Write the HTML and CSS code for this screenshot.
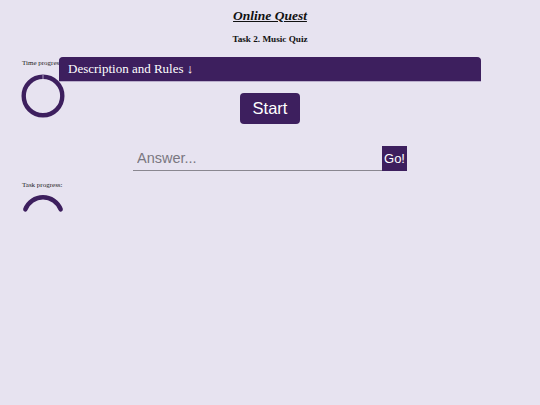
FILE: index.html
```html
<!DOCTYPE html>
<html lang="en">
<head>
<meta charset="utf-8">
<title>Online Quest</title>
<link rel="stylesheet" href="styles.css">
</head>
<body>
<header class="head">
  <h1 class="title">Online Quest</h1>
  <h2 class="subtitle">Task 2. Music Quiz</h2>
</header>
<div class="layout">
  <aside class="side">
    <div class="side-label">Time progress:</div>
    <svg class="ring" width="44" height="44" viewBox="0 0 44 44">
      <circle cx="22" cy="22" r="19.3" fill="none" stroke="#3d1f5e" stroke-width="4.4"/>
      <line x1="22" y1="0.6" x2="22" y2="5" stroke="#cbbfdc" stroke-width="0.8"/>
    </svg>
    <div class="side-label task-label">Task progress:</div>
    <svg class="arc" width="44" height="20" viewBox="0 0 44 20">
      <path d="M4.3 15.4 A19 19 0 0 1 39.7 15.4" fill="none" stroke="#3d1f5e" stroke-width="4.4" stroke-linecap="round"/>
    </svg>
  </aside>
  <main class="main">
    <div class="rules-bar">Description and Rules ↓</div>
    <div class="start-row"><button class="start-btn">Start</button></div>
    <form class="answer-row">
      <input class="answer-input" type="text" placeholder="Answer...">
      <button class="go-btn" type="button">Go!</button>
    </form>
  </main>
  <div class="spacer"></div>
</div>
</body>
</html>
```
FILE: styles.css
```css
html, body {
  margin: 0;
  padding: 0;
  background: #e7e3f0;
}
body {
  font-family: "Liberation Serif", "Times New Roman", serif;
  color: #111;
  width: 540px;
  height: 405px;
  overflow: hidden;
}
.head {
  padding-top: 8px;
  text-align: center;
}
.title {
  margin: 0;
  font-size: 13.5px;
  line-height: 16px;
  font-style: italic;
  font-weight: bold;
  text-decoration: underline;
}
.subtitle {
  margin: 7px 0 0;
  font-size: 9.2px;
  line-height: 16px;
  font-weight: bold;
}
.layout {
  margin-top: 10px;
  display: grid;
  grid-template-columns: 59px 1fr 59px;
}
.side {
  padding-left: 22px;
  padding-top: 2px;
  display: flex;
  flex-direction: column;
  align-items: flex-start;
}
.side-label {
  font-size: 7px;
  line-height: 8px;
  white-space: nowrap;
  color: #222;
}
.ring {
  display: block;
  margin-top: 7px;
  margin-left: -1.5px;
}
.task-label {
  margin-top: 63px;
}
.arc {
  display: block;
  margin-top: 4.5px;
  margin-left: -1.5px;
}
.main {
  position: relative;
  display: flex;
  flex-direction: column;
  align-items: stretch;
}
.rules-bar {
  height: 23.5px;
  background: #3d1f5e;
  border-radius: 4px 4px 0 0;
  color: #fff;
  font-size: 13px;
  line-height: 24px;
  padding-left: 9px;
  box-shadow: 0 0.5px 0 #8e7aa8;
}
.start-row {
  display: flex;
  justify-content: center;
  margin-top: 12.5px;
}
.start-btn {
  width: 60px;
  height: 31px;
  border: none;
  border-radius: 4px;
  background: #3d1f5e;
  color: #fff;
  font-family: "Liberation Sans", Arial, sans-serif;
  font-size: 16.5px;
  padding: 0;
}
.answer-row {
  margin: 22px 0 0;
  display: flex;
  justify-content: center;
}
.answer-input {
  width: 249px;
  height: 25px;
  box-sizing: border-box;
  border: none;
  border-bottom: 1px solid #8a8790;
  background: transparent;
  font-family: "Liberation Sans", Arial, sans-serif;
  font-size: 14.5px;
  padding: 0 0 0 4px;
  margin: 0;
  outline: none;
}
.answer-input::placeholder {
  color: #7a7780;
}
.go-btn {
  width: 25px;
  height: 25px;
  border: none;
  border-radius: 0;
  background: #3d1f5e;
  color: #fff;
  font-family: "Liberation Sans", Arial, sans-serif;
  font-size: 13px;
  padding: 0;
  margin: 0;
}
```
